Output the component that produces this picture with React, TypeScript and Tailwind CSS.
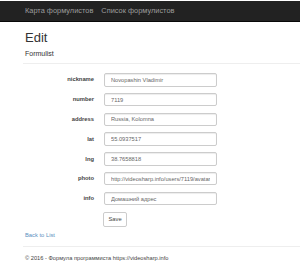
import React from 'react';

const fields = [
  { label: 'nickname', value: 'Novopashin Vladimir' },
  { label: 'number', value: '7119' },
  { label: 'address', value: 'Russia, Kolomna' },
  { label: 'lat', value: '55.0937517' },
  { label: 'lng', value: '38.7658818' },
  { label: 'photo', value: 'http://videosharp.info/users/7119/avatar/7119.jpg' },
  { label: 'info', value: 'Домашний адрес' },
];

export default function App() {
  return (
    <div className="w-[300px] h-[278px] bg-white text-[#333] font-['Liberation_Sans',Arial,sans-serif] overflow-hidden pt-px">
      <div className="h-[21px] bg-[#222] border-b border-[#080808] flex items-center pl-[25px] gap-[8px] text-[7.4px] text-[#9d9d9d]">
        <span>Карта формулистов</span>
        <span>Список формулистов</span>
      </div>

      <div className="px-[25px]">
        <h2 className="text-[13px] leading-none mt-[9px]">Edit</h2>
        <h4 className="text-[7px] leading-none mt-[6px]">Formulist</h4>
        <div className="border-t border-[#eee] mt-[6px] -ml-[2px] -mr-[25px]" />

        <form className="mt-[9px] flex flex-col gap-[6.3px]">
          {fields.map((f) => (
            <div key={f.label} className="flex items-center">
              <label className="w-[69px] text-right text-[5.8px] font-bold text-[#444]">{f.label}</label>
              <input
                readOnly
                value={f.value}
                className="ml-[10px] w-[113px] h-[13.5px] border border-[#ccc] rounded-[2px] px-[6px] text-[5.7px] text-[#666] outline-none shadow-[inset_0_1px_1px_rgba(0,0,0,0.075)]"
              />
            </div>
          ))}
          <div className="flex pl-[78px]">
            <button type="button" className="w-[24px] h-[15px] border border-[#ccc] rounded-[2px] bg-white text-[5.8px] text-[#444]">
              Save
            </button>
          </div>
        </form>

        <div className="mt-[4px] text-[5.8px] text-[#5b8fc0]">Back to List</div>
        <div className="border-t border-[#eee] mt-[7px] -ml-[2px] -mr-[25px]" />
        <footer className="mt-[7px] text-[5.7px] text-[#444]">© 2016 - Формула программиста https://videosharp.info</footer>
      </div>
    </div>
  );
}
